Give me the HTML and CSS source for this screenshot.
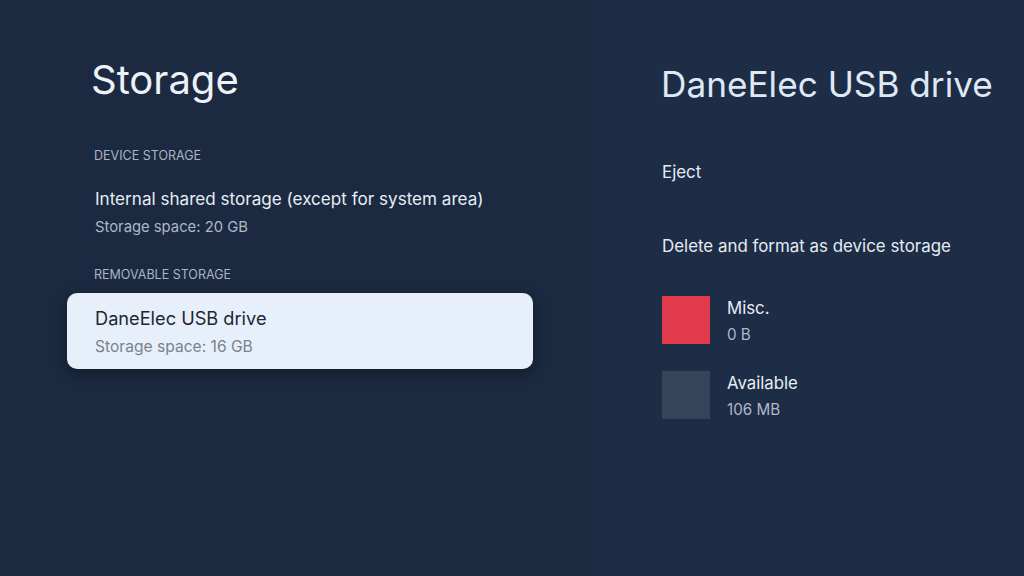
FILE: index.html
```html
<!DOCTYPE html>
<html>
<head>
<meta charset="utf-8">
<link rel="stylesheet" href="styles.css">
</head>
<body>
<div class="screen">
  <section class="left">
    <h1 class="title">Storage</h1>
    <div class="section-label first">DEVICE STORAGE</div>
    <div class="item">
      <div class="item-title">Internal shared storage (except for system area)</div>
      <div class="item-sub">Storage space: 20 GB</div>
    </div>
    <div class="section-label second">REMOVABLE STORAGE</div>
    <div class="item card">
      <div class="item-title">DaneElec USB drive</div>
      <div class="item-sub">Storage space: 16 GB</div>
    </div>
  </section>
  <section class="right">
    <h2 class="rtitle">DaneElec USB drive</h2>
    <div class="action eject">Eject</div>
    <div class="action format">Delete and format as device storage</div>
    <div class="legend">
      <div class="swatch red"></div>
      <div class="legend-text">
        <div class="l-title">Misc.</div>
        <div class="l-sub">0 B</div>
      </div>
    </div>
    <div class="legend">
      <div class="swatch gray"></div>
      <div class="legend-text">
        <div class="l-title">Available</div>
        <div class="l-sub">106 MB</div>
      </div>
    </div>
  </section>
</div>
</body>
</html>
```
FILE: styles.css
```css
* { box-sizing: border-box; margin: 0; padding: 0; }
html, body { width: 1024px; height: 576px; overflow: hidden; }
body { background: #1b2a40; font-family: Inter, "Open Sans", "Liberation Sans", sans-serif; }
.screen { display: flex; width: 1024px; height: 576px; }
.left { width: 592px; background: #1b2a40; padding: 54px 0 0 67px; }
.right { flex: 1; background: #1e2d46; padding: 58px 0 0 70px; }
.title { font-weight: 400; font-size: 40px; line-height: 52px; color: #eef2f8; margin-left: 24px; }
.section-label { font-size: 12.5px; line-height: 16px; color: #a9b4c4; margin-left: 27px; }
.section-label.first { margin-top: 42px; }
.section-label.second { margin-top: 30px; }
.item { width: 466px; padding: 0 28px; }
.item:not(.card) { margin-top: 23px; }
.item-title { font-size: 17.1px; line-height: 24px; color: #e8edf5; }
.item-sub { font-size: 14.8px; line-height: 20px; margin-top: 6px; color: #aeb8c7; }
.card { margin-top: 10px; background: #e7effa; border-radius: 10px; padding-top: 13px; height: 76px; box-shadow: 0 4px 14px rgba(0,0,0,0.35); }
.card .item-title { color: #1f2631; font-size: 18.2px; }
.card .item-sub { color: #7b818b; margin-top: 7px; font-size: 15.6px; }
.rtitle { font-weight: 400; font-size: 35.2px; line-height: 52px; color: #dfe8f5; margin-left: -1px; }
.action { font-size: 16.9px; line-height: 22px; color: #e6ebf3; }
.eject { margin-top: 51px; }
.format { margin-top: 52px; }
.legend { display: flex; gap: 17px; }
.format + .legend { margin-top: 39px; }
.legend + .legend { margin-top: 26px; }
.swatch { width: 48px; height: 48px; }
.red { background: #e23a4d; }
.gray { background: #36445a; }
.legend-text { padding-top: 1px; }
.l-title { font-size: 16.8px; line-height: 22px; color: #e8edf5; }
.l-sub { font-size: 15.2px; line-height: 20px; margin-top: 6px; color: #aeb8c7; }
```
